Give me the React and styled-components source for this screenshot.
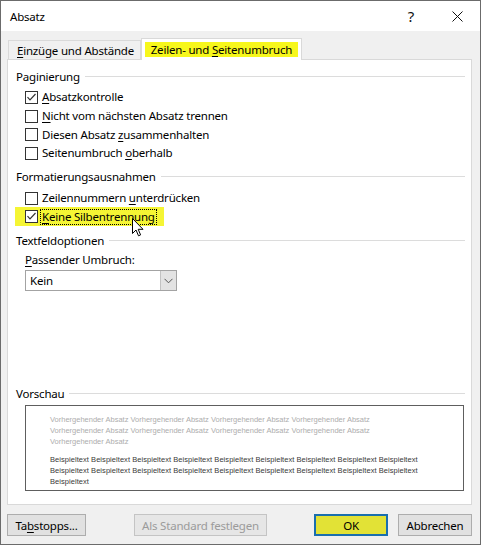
import React from 'react';
import styled, { createGlobalStyle } from 'styled-components';

const Global = createGlobalStyle`
  html, body { margin: 0; padding: 0; background: #ffffff; }
  body {
    font-family: "Noto Sans", "Open Sans", sans-serif;
    font-size: 11.5px;
    letter-spacing: -0.2px;
    color: #000;
  }
  * { box-sizing: border-box; }
`;

const Frame = styled.div`
  position: relative;
  width: 481px;
  height: 545px;
  border: 1px solid #6b6b6b;
  display: flex;
  flex-direction: column;
  background: #f0f0f0;
`;

const TitleBar = styled.div`
  height: 30px;
  flex: none;
  background: #fff;
  display: flex;
  align-items: center;
  padding-left: 9px;
`;

const Title = styled.span`
  flex: 1;
`;

const TitleButton = styled.div`
  width: 46px;
  height: 30px;
  display: flex;
  align-items: center;
  justify-content: center;
  font-size: 15px;
  color: #111;
`;

const Body = styled.div`
  flex: 1;
  display: flex;
  flex-direction: column;
  padding: 7px 8px 0 6px;
`;

const TabStrip = styled.div`
  display: flex;
  align-items: flex-end;
  height: 22px;
  padding-left: 1px;
  margin-bottom: -1px;
  position: relative;
  z-index: 1;
`;

const Tab = styled.div`
  display: flex;
  align-items: center;
  justify-content: center;
  white-space: nowrap;
  width: ${p => p.$w}px;
  height: ${p => (p.$active ? 22 : 19)}px;
  margin-bottom: ${p => (p.$active ? 0 : 1)}px;
  border: 1px solid #d9d9d9;
  border-bottom: none;
  background: ${p => (p.$active ? '#ffffff' : '#f0f0f0')};
  padding-bottom: ${p => (p.$active ? 1 : 0)}px;
  padding-left: ${p => (p.$active ? 0 : 2)}px;
`;

const Marked = styled.span`
  background: #f7f71c;
  padding: 0 6px;
  line-height: 15px;
`;

const Key = styled.u`
  text-decoration: underline;
  text-underline-offset: 2px;
`;

const Panel = styled.div`
  height: 446px;
  flex: none;
  border: 1px solid #d9d9d9;
  background: #fff;
  display: flex;
  flex-direction: column;
  padding: 8px 6px 13px 8px;
`;

const GroupHeader = styled.div`
  display: flex;
  align-items: center;
  gap: 5px;
  height: 16px;
  margin-top: ${p => p.$mt || 0}px;
  margin-bottom: 4px;
  white-space: nowrap;
  &::after {
    content: '';
    flex: 1;
    height: 1px;
    background: #dcdcdc;
  }
`;

const List = styled.div`
  display: flex;
  flex-direction: column;
  padding-left: 9px;
`;

const Row = styled.div`
  display: flex;
  align-items: center;
  gap: 2px;
  height: 18.7px;
  width: fit-content;
  ${p =>
    p.$marked &&
    `
    background: #f5f534;
    margin-left: -10px;
    padding-left: 10px;
    padding-right: 7px;
  `}
`;

const Box = styled.span`
  width: 13px;
  height: 13px;
  border: 1px solid #333;
  background: #fff;
  display: flex;
  align-items: center;
  justify-content: center;
`;

const Label = styled.span`
  border: 1px ${p => (p.$focus ? 'dotted #000' : 'solid transparent')};
  padding: 0 1px;
  line-height: 14px;
  white-space: nowrap;
`;

const FieldLabel = styled.div`
  height: 16px;
  line-height: 16px;
  margin-bottom: 2px;
`;

const Select = styled.div`
  width: 152px;
  height: 21px;
  border: 1px solid #a3a3a3;
  display: flex;
  align-items: stretch;
  background: #fff;
`;

const SelectValue = styled.span`
  flex: 1;
  padding-left: 4px;
  display: flex;
  align-items: center;
`;

const DropButton = styled.span`
  width: 16px;
  background: #e3e3e3;
  border-left: 1px solid #c2c2c2;
  display: flex;
  align-items: center;
  justify-content: center;
`;

const PreviewSection = styled.div`
  margin-top: auto;
`;

const PreviewBox = styled.div`
  height: 86px;
  margin: 4px 1px 0 9px;
  border: 1px solid #5e5e5e;
  padding: 8px 8px 0 24px;
  font-family: "Liberation Sans", Arial, sans-serif;
  font-size: 7.5px;
  letter-spacing: 0;
  line-height: 11px;
  white-space: nowrap;
`;

const PreviewPara = styled.div`
  color: ${p => (p.$prev ? '#adadad' : '#3a3a3a')};
  letter-spacing: ${p => (p.$prev ? 0 : 0.05)}px;
  margin-top: ${p => p.$mt || 0}px;
`;

const ButtonRow = styled.div`
  display: flex;
  height: 22px;
  margin-top: 9px;
`;

const Button = styled.div`
  width: ${p => p.$w}px;
  margin-left: ${p => p.$ml || 0}px;
  height: 22px;
  display: flex;
  align-items: center;
  justify-content: center;
  background: ${p => (p.$primary ? '#e2e236' : p.$disabled ? '#e6e6e6' : '#e1e1e1')};
  border: ${p => (p.$primary ? '2px solid #1a6fae' : p.$disabled ? '1px solid #c4c4c4' : '1px solid #adadad')};
  color: ${p => (p.$disabled ? '#9b9b9b' : '#000')};
  white-space: nowrap;
`;

const Spacer = styled.div`
  flex: 1;
`;

const Cursor = styled.svg`
  position: absolute;
  left: 131px;
  top: 217px;
  z-index: 5;
`;

const Check = () => (
  <svg width="11" height="11" viewBox="0 0 11 11">
    <path d="M1.5 5.2 L4 7.8 L9.5 2" fill="none" stroke="#333" strokeWidth="1.2" />
  </svg>
);

const CheckRow = ({ checked, marked, focus, children }) => (
  <Row $marked={marked}>
    <Box>{checked && <Check />}</Box>
    <Label $focus={focus}>{children}</Label>
  </Row>
);

const prevLine = 'Vorhergehender Absatz Vorhergehender Absatz Vorhergehender Absatz Vorhergehender Absatz';
const sampleLine = 'Beispieltext Beispieltext Beispieltext Beispieltext Beispieltext Beispieltext Beispieltext Beispieltext Beispieltext';

export default function App() {
  return (
    <>
      <Global />
      <Frame>
        <TitleBar>
          <Title>Absatz</Title>
          <TitleButton>?</TitleButton>
          <TitleButton>
            <svg width="11" height="11" viewBox="0 0 11 11">
              <path d="M0.5 0.5 L10.5 10.5 M10.5 0.5 L0.5 10.5" stroke="#111" strokeWidth="1" />
            </svg>
          </TitleButton>
        </TitleBar>
        <Body>
          <TabStrip>
            <Tab $w={133}>
              <span><Key>E</Key>inzüge und Abstände</span>
            </Tab>
            <Tab $w={161} $active>
              <Marked>Zeilen- und <Key>S</Key>eitenumbruch</Marked>
            </Tab>
          </TabStrip>
          <Panel>
            <GroupHeader>Paginierung</GroupHeader>
            <List>
              <CheckRow checked><Key>A</Key>bsatzkontrolle</CheckRow>
              <CheckRow><Key>N</Key>icht vom nächsten Absatz trennen</CheckRow>
              <CheckRow>Diesen Absatz <Key>z</Key>usammenhalten</CheckRow>
              <CheckRow>Seitenumbruch <Key>o</Key>berhalb</CheckRow>
            </List>
            <GroupHeader $mt={6}>Formatierungsausnahmen</GroupHeader>
            <List>
              <CheckRow>Zeilennummern <Key>u</Key>nterdrücken</CheckRow>
              <CheckRow checked marked focus><Key>K</Key>eine Silbentrennung</CheckRow>
            </List>
            <GroupHeader $mt={6}>Textfeldoptionen</GroupHeader>
            <List>
              <FieldLabel><Key>P</Key>assender Umbruch:</FieldLabel>
              <Select>
                <SelectValue>Kein</SelectValue>
                <DropButton>
                  <svg width="9" height="6" viewBox="0 0 9 6">
                    <path d="M0.5 0.8 L4.5 4.8 L8.5 0.8" fill="none" stroke="#555" strokeWidth="1" />
                  </svg>
                </DropButton>
              </Select>
            </List>
            <PreviewSection>
              <GroupHeader>Vorschau</GroupHeader>
              <PreviewBox>
                <PreviewPara $prev>
                  <div>{prevLine}</div>
                  <div>{prevLine}</div>
                  <div>Vorhergehender Absatz</div>
                </PreviewPara>
                <PreviewPara $mt={7}>
                  <div>{sampleLine}</div>
                  <div>{sampleLine}</div>
                  <div>Beispieltext</div>
                </PreviewPara>
              </PreviewBox>
            </PreviewSection>
          </Panel>
          <ButtonRow>
            <Button $w={79}>Ta<Key>b</Key>stopps...</Button>
            <Button $w={133} $ml={48} $disabled>Als Standard festlegen</Button>
            <Spacer />
            <Button $w={74} $primary>OK</Button>
            <Button $w={74} $ml={10}>Abbrechen</Button>
          </ButtonRow>
        </Body>
        <Cursor width="12" height="19" viewBox="0 0 12 19">
          <path d="M0.5 0.5 L0.5 15.5 L4 12 L6.5 17.8 L8.6 16.9 L6.2 11.3 L11 11.3 Z" fill="#fff" stroke="#000" strokeWidth="1" strokeLinejoin="miter" />
        </Cursor>
      </Frame>
    </>
  );
}
